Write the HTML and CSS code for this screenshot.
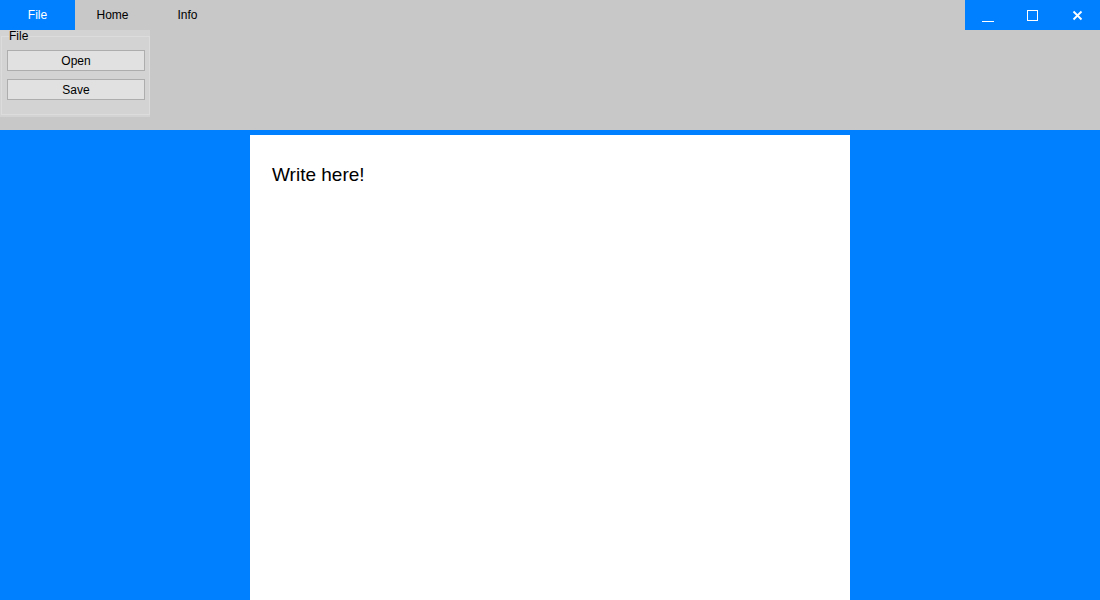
FILE: index.html
```html
<!DOCTYPE html>
<html>
<head>
<meta charset="utf-8">
<link rel="stylesheet" href="styles.css">
</head>
<body>
<div class="app">
  <header class="ribbon">
    <div class="tabs-row">
      <nav class="tabs">
        <div class="tab active">File</div>
        <div class="tab">Home</div>
        <div class="tab">Info</div>
      </nav>
      <div class="winctl">
        <div class="wbtn">
          <svg width="14" height="14" viewBox="0 0 14 14"><path d="M1 12.5h12" stroke="#fff" stroke-width="1" fill="none"/></svg>
        </div>
        <div class="wbtn">
          <svg width="14" height="14" viewBox="0 0 14 14"><rect x="1.5" y="1.5" width="10" height="10" stroke="#fff" stroke-width="1" fill="none"/></svg>
        </div>
        <div class="wbtn">
          <svg width="14" height="14" viewBox="0 0 14 14"><path d="M2.5 2.5l8 8M10.5 2.5l-8 8" stroke="#fff" stroke-width="1.8" fill="none"/></svg>
        </div>
      </div>
    </div>
    <div class="panel">
      <fieldset class="group">
        <legend>File</legend>
        <button class="btn">Open</button>
        <button class="btn">Save</button>
      </fieldset>
    </div>
  </header>
  <main class="workspace">
    <div class="page">
      <div class="doc-text">Write here!</div>
    </div>
  </main>
</div>
</body>
</html>
```
FILE: styles.css
```css
html, body {
  margin: 0;
  padding: 0;
  height: 100%;
  overflow: hidden;
}
body {
  font-family: "Liberation Sans", Arial, sans-serif;
  font-size: 12px;
  color: #000;
}
.app {
  display: flex;
  flex-direction: column;
  height: 600px;
}
.ribbon {
  height: 130px;
  background: #c8c8c8;
  flex: none;
}
.tabs-row {
  display: flex;
  justify-content: space-between;
  height: 30px;
}
.tabs {
  display: flex;
}
.tab {
  width: 75px;
  height: 30px;
  line-height: 30px;
  text-align: center;
  font-size: 12px;
  color: #000;
}
.tab.active {
  background: #0080ff;
  color: #fff;
}
.winctl {
  display: flex;
  width: 135px;
  background: #0080ff;
}
.wbtn {
  flex: 1;
  display: flex;
  align-items: center;
  justify-content: center;
  padding-top: 1px;
}
.panel {
  width: 150px;
  height: 87px;
  background: #d3d3d3;
  box-sizing: border-box;
  padding: 0 1px 2px 1px;
}
.group {
  margin: 0;
  height: 85px;
  box-sizing: border-box;
  border: 1px solid #dcdcdc;
  padding: 7px 4px 0 5px;
  display: flex;
  flex-direction: column;
  gap: 8px;
}
.group legend {
  padding: 0;
  margin-left: 2px;
  font-size: 12px;
  line-height: 13px;
}
.btn {
  width: 138px;
  height: 21px;
  margin: 0;
  padding: 0;
  background: #e1e1e1;
  border: 1px solid #adadad;
  font-family: "Liberation Sans", Arial, sans-serif;
  font-size: 12px;
  color: #000;
}
.workspace {
  flex: 1;
  background: #0080ff;
  display: flex;
  justify-content: center;
  padding-top: 5px;
  min-height: 0;
}
.page {
  width: 600px;
  background: #fff;
  box-sizing: border-box;
  padding: 29px 22px;
}
.doc-text {
  font-size: 19px;
  line-height: 22px;
}
```
